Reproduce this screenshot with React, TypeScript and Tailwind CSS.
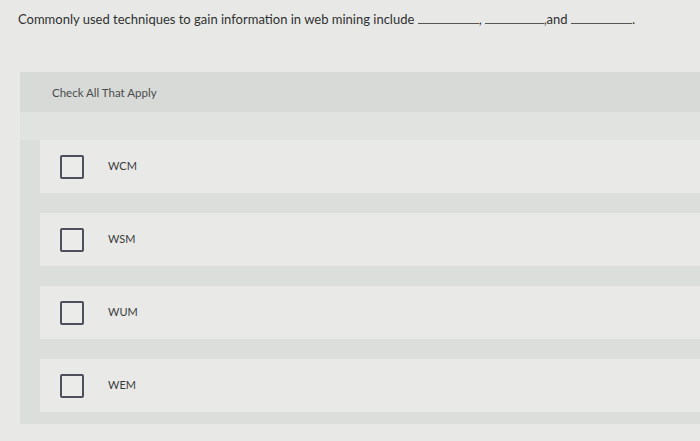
import React from 'react';

const options = ['WCM', 'WSM', 'WUM', 'WEM'];

function Blank({ w = 'w-[61px]' }: { w?: string }) {
  return <span className={`inline-block ${w} border-b border-[#555] h-[12px] align-baseline`} />;
}

export default function App() {
  return (
    <div
      className="w-[700px] h-[441px] overflow-hidden bg-[#e8e9e7] text-[#333]"
      style={{ fontFamily: 'Lato, "Open Sans", sans-serif' }}
    >
      {/* Question */}
      <div className="pl-[18px] pt-[11px] text-[13px] leading-[16px] text-[#2f3030]">
        Commonly used techniques to gain information in web mining include <Blank />,
        <Blank w="w-[59px] ml-[3px]" />,and <Blank />.
      </div>

      {/* Answer panel */}
      <div className="mt-[45px] ml-[20px] bg-[#dcdedc] pb-[12px]">
        <div className="h-[40px] pl-[32px] flex items-center pt-[2px] text-[11.5px] text-[#4a4b4b] bg-[#d8dad8]">
          Check All That Apply
        </div>
        <div className="h-[28px] bg-[#e1e3e1]" />
        <div className="flex flex-col gap-[20px] ml-[20px]">
          {options.map((o) => (
            <div key={o} className="h-[53px] bg-[#e9eae8] flex items-center pl-[20px]">
              <span className="w-[24px] h-[24px] border-2 border-[#4d4f5c] rounded-[2px] bg-[#ebecea]" />
              <span className="ml-[24px] text-[11px] text-[#3a3b3b]">{o}</span>
            </div>
          ))}
        </div>
      </div>
    </div>
  );
}
